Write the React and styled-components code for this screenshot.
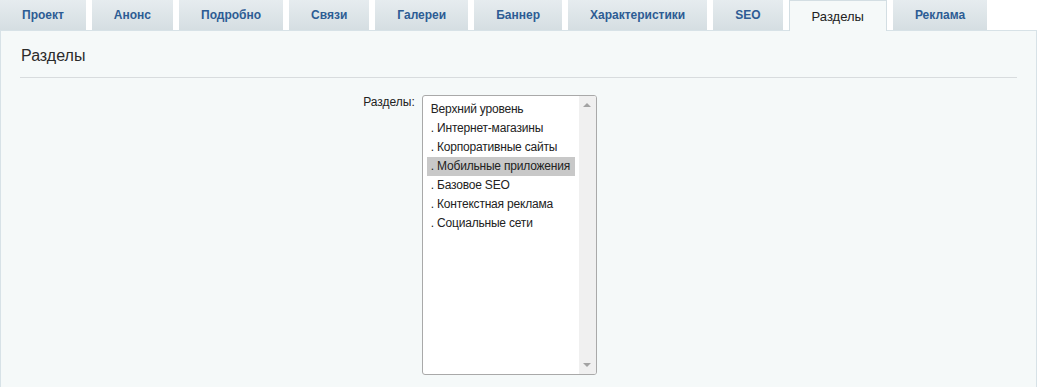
import React from "react";
import styled, { createGlobalStyle } from "styled-components";

const GlobalStyle = createGlobalStyle`
  html, body {
    margin: 0;
    padding: 0;
    background: #fff;
  }
  body {
    font-family: "Liberation Sans", Arial, sans-serif;
  }
`;

const tabs = [
  "Проект",
  "Анонс",
  "Подробно",
  "Связи",
  "Галереи",
  "Баннер",
  "Характеристики",
  "SEO",
  "Разделы",
  "Реклама",
];

const sections = [
  "Верхний уровень",
  ". Интернет-магазины",
  ". Корпоративные сайты",
  ". Мобильные приложения",
  ". Базовое SEO",
  ". Контекстная реклама",
  ". Социальные сети",
];

const Page = styled.div`
  width: 1039px;
  height: 387px;
  overflow: hidden;
`;

const TabBar = styled.div`
  display: flex;
  gap: 6px;
  height: 30px;
  width: 1037px;
  position: relative;
  z-index: 1;
`;

const Tab = styled.div`
  box-sizing: border-box;
  height: ${(p) => (p.$active ? "31px" : "30px")};
  padding: 0 22px;
  display: flex;
  align-items: center;
  font-size: ${(p) => (p.$active ? "13px" : "12px")};
  font-weight: ${(p) => (p.$active ? "normal" : "bold")};
  color: ${(p) => (p.$active ? "#222" : "#2d5c94")};
  background: ${(p) =>
    p.$active ? "#f5f9f9" : "linear-gradient(#e6ecef, #d5dee2)"};
  border: ${(p) => (p.$active ? "1px solid #d3dee3" : "none")};
  border-bottom: none;
  cursor: pointer;
  white-space: nowrap;
`;

const Panel = styled.div`
  box-sizing: border-box;
  width: 1037px;
  height: 357px;
  background: #f5f9f9;
  border: 1px solid #d7e2e7;
  border-bottom: none;
`;

const Heading = styled.h2`
  margin: 0 19px;
  padding: 14px 0 11px 1px;
  font-size: 16px;
  line-height: 21px;
  font-weight: normal;
  color: #2b2b2b;
  border-bottom: 1px solid #d8dcde;
`;

const Form = styled.div`
  display: grid;
  grid-template-columns: 40% 60%;
  margin: 17px 19px 0;
`;

const Label = styled.label`
  text-align: right;
  padding-right: 4px;
  font-size: 12px;
  line-height: 15px;
  color: #222;
`;

const Field = styled.div`
  padding-left: 3px;
`;

const ListBox = styled.div`
  box-sizing: border-box;
  width: 175px;
  height: 280px;
  display: flex;
  background: #fff;
  border: 1px solid #a9a9a9;
  border-radius: 3px;
  overflow: hidden;
`;

const Options = styled.div`
  flex: 1;
  min-width: 0;
  padding: 4px;
`;

const Option = styled.div`
  height: 19px;
  line-height: 19px;
  padding: 0 4px;
  font-size: 12px;
  letter-spacing: -0.2px;
  color: #222;
  white-space: nowrap;
  background: ${(p) => (p.$selected ? "#c8c8c8" : "transparent")};
`;

const Scrollbar = styled.div`
  flex: 0 0 17px;
  background: #f0f0f0;
  display: flex;
  flex-direction: column;
  justify-content: space-between;
  align-items: center;
  padding: 7px 0;
  box-sizing: border-box;
`;

const Arrow = styled.div`
  width: 0;
  height: 0;
  border-left: 4px solid transparent;
  border-right: 4px solid transparent;
  ${(p) =>
    p.$down
      ? "border-top: 4px solid #a3a3a3;"
      : "border-bottom: 4px solid #a3a3a3;"}
`;

export default function App() {
  return (
    <Page>
      <GlobalStyle />
      <TabBar>
        {tabs.map((t) => (
          <Tab key={t} $active={t === "Разделы"}>
            {t}
          </Tab>
        ))}
      </TabBar>
      <Panel>
        <Heading>Разделы</Heading>
        <Form>
          <Label>Разделы:</Label>
          <Field>
            <ListBox role="listbox" aria-multiselectable="true">
              <Options>
                {sections.map((s) => (
                  <Option key={s} $selected={s === ". Мобильные приложения"}>
                    {s}
                  </Option>
                ))}
              </Options>
              <Scrollbar>
                <Arrow />
                <Arrow $down />
              </Scrollbar>
            </ListBox>
          </Field>
        </Form>
      </Panel>
    </Page>
  );
}
